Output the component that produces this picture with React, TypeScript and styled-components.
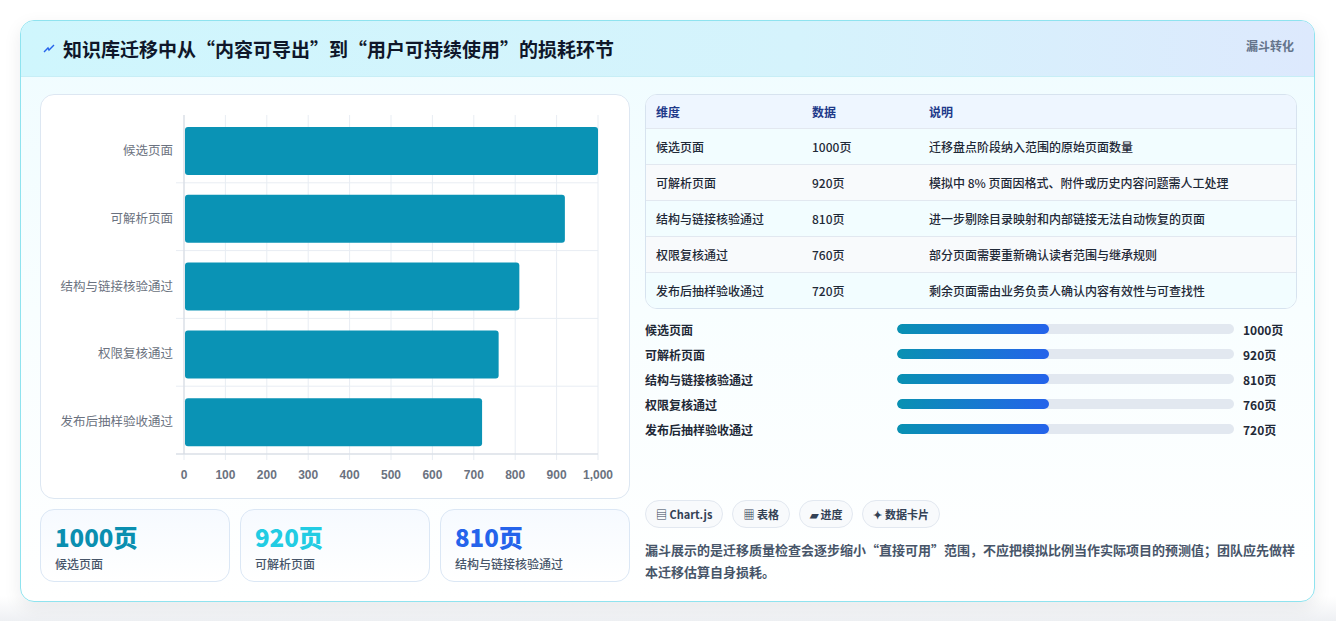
import React from 'react';
import styled, { createGlobalStyle } from 'styled-components';

const GlobalStyle = createGlobalStyle`
  body {
    margin: 0;
    background: #f3f4f6;
    font-family: "Noto Sans CJK SC", "Liberation Sans", sans-serif;
  }
`;

const Page = styled.div`
  width: 1336px;
  height: 621px;
  padding: 20px 21px 0 20px;
  box-sizing: border-box;
  background: linear-gradient(180deg, #ffffff 0%, #ffffff 96%, #eef0f3 100%);
`;

const Card = styled.div`
  height: 580px;
  border: 1px solid #8fe3ef;
  border-radius: 14px;
  overflow: hidden;
  background: linear-gradient(180deg, #effcff 0%, #f8feff 50%, #ffffff 100%);
  box-shadow: 0 6px 18px rgba(15, 23, 42, 0.08);
  display: flex;
  flex-direction: column;
`;

const Header = styled.div`
  height: 55px;
  display: flex;
  align-items: center;
  justify-content: space-between;
  padding: 0 20px 0 22px;
  background: linear-gradient(90deg, #cff6fd 0%, #d5f3fc 60%, #dde9fd 100%);
  border-bottom: 1px solid #c7eef6;
`;

const Title = styled.h1`
  margin: 0;
  display: flex;
  align-items: center;
  gap: 8px;
  font-size: 19px;
  font-weight: 700;
  color: #0f172a;
`;

const Tag = styled.span`
  align-self: flex-start;
  margin-top: 16px;
  font-size: 12px;
  font-weight: 700;
  color: #64748b;
`;

const Body = styled.div`
  flex: 1;
  display: grid;
  grid-template-columns: 590px 652px;
  gap: 15px;
  padding: 17px 18px 18px 19px;
`;

const LeftCol = styled.div`
  display: flex;
  flex-direction: column;
  gap: 10px;
`;

const ChartBox = styled.div`
  height: 403px;
  border: 1px solid #dde7f2;
  border-radius: 14px;
  background: #ffffff;
`;

const Stats = styled.div`
  display: grid;
  grid-template-columns: repeat(3, 1fr);
  gap: 10px;
`;

const Stat = styled.div`
  height: 73px;
  box-sizing: border-box;
  border: 1px solid #dbe7f5;
  border-radius: 14px;
  background: linear-gradient(180deg, #f6faff 0%, #ffffff 100%);
  padding: 11px 14px;
`;

const StatValue = styled.div<{ $c: string }>`
  font-size: 24px;
  font-weight: 800;
  color: ${p => p.$c};
  line-height: 32px;
`;

const StatLabel = styled.div`
  font-size: 12px;
  color: #475569;
  font-weight: 500;
  margin-top: 2px;
`;

const RightCol = styled.div`
  display: flex;
  flex-direction: column;
`;

const Table = styled.div`
  border: 1px solid #d7e3ef;
  border-radius: 12px;
  overflow: hidden;
  background: #ffffff;
`;

const Row = styled.div<{ $head?: boolean; $alt?: boolean }>`
  display: grid;
  grid-template-columns: 156px 117px 1fr;
  height: ${p => (p.$head ? '33px' : '35px')};
  align-items: center;
  padding-left: 10px;
  font-size: 12px;
  font-weight: ${p => (p.$head ? 700 : 500)};
  color: ${p => (p.$head ? '#1e3a8a' : '#1f2937')};
  background: ${p => (p.$head ? '#eef6ff' : p.$alt ? '#f8fafc' : '#f2fdff')};
  & + & {
    border-top: 1px solid #e2e8f0;
  }
`;

const Bars = styled.div`
  display: flex;
  flex-direction: column;
  gap: 7px;
  margin-top: 11px;
`;

const BarRow = styled.div`
  display: grid;
  grid-template-columns: 243px 337px 1fr;
  gap: 0 9px;
  align-items: center;
  height: 18px;
  font-size: 12px;
  font-weight: 700;
  color: #1f2937;
`;

const Track = styled.div`
  height: 10px;
  border-radius: 5px;
  background: #e2e8f0;
  overflow: hidden;
`;

const Fill = styled.div`
  height: 100%;
  border-radius: 5px;
  background: linear-gradient(90deg, #0891b2, #2563eb);
`;

const Chips = styled.div`
  display: flex;
  gap: 9px;
  margin-top: auto;
`;

const Chip = styled.span`
  height: 28px;
  box-sizing: border-box;
  display: inline-flex;
  align-items: center;
  gap: 4px;
  padding: 0 10px;
  border: 1px solid #e2e8f0;
  border-radius: 14px;
  background: #f8fafc;
  font-size: 11px;
  font-weight: 700;
  color: #334155;
`;

const Note = styled.p`
  margin: 11px 0 0;
  font-size: 13px;
  line-height: 22px;
  font-weight: 600;
  color: #475569;
`;

const data = [
  { label: '候选页面', value: 1000, desc: '迁移盘点阶段纳入范围的原始页面数量' },
  { label: '可解析页面', value: 920, desc: '模拟中 8% 页面因格式、附件或历史内容问题需人工处理' },
  { label: '结构与链接核验通过', value: 810, desc: '进一步剔除目录映射和内部链接无法自动恢复的页面' },
  { label: '权限复核通过', value: 760, desc: '部分页面需要重新确认读者范围与继承规则' },
  { label: '发布后抽样验收通过', value: 720, desc: '剩余页面需由业务负责人确认内容有效性与可查找性' },
];

const X0 = 143;
const X1 = 557;
const TOP = 20;
const BOTTOM = 359;
const band = (BOTTOM - TOP) / data.length;

const Chart = () => (
  <svg width="589" height="403" style={{ display: 'block' }}>
    {Array.from({ length: 11 }).map((_, i) => {
      const x = X0 + ((X1 - X0) * i) / 10;
      return (
        <g key={i}>
          <line x1={x} y1={TOP} x2={x} y2={BOTTOM + 6} stroke="#e8edf3" />
          <text x={x} y={384} textAnchor="middle" fontSize="12" fontWeight="600" fill="#6b7280" fontFamily="Liberation Sans, sans-serif">
            {i === 10 ? '1,000' : i * 100}
          </text>
        </g>
      );
    })}
    {data.map((d, i) => (
      <line key={'h' + i} x1={X0 - 8} x2={X1} y1={TOP + band * (i + 1)} y2={TOP + band * (i + 1)} stroke="#e8edf3" />
    ))}
    <line x1={X0} y1={TOP} x2={X0} y2={BOTTOM} stroke="#d4d9e1" />
    <line x1={X0 - 8} y1={BOTTOM} x2={X1} y2={BOTTOM} stroke="#d4d9e1" />
    {data.map((d, i) => {
      const y = TOP + band * i + 12;
      return (
        <g key={d.label}>
          <rect x={X0 + 1} y={y} width={((X1 - X0) * d.value) / 1000 - 1} height={48} rx={3} fill="#0a93b5" />
          <text x={132} y={y + 28} textAnchor="end" fontSize="12.5" fill="#6b7280" fontFamily="Noto Sans CJK SC, sans-serif">
            {d.label}
          </text>
        </g>
      );
    })}
  </svg>
);

export default function App() {
  return (
    <Page>
      <GlobalStyle />
      <Card>
        <Header>
          <Title>
            <svg width="12" height="10" viewBox="0 0 12 10">
              <path d="M1 8 L5 4 L6 6 L11 1" stroke="#2563eb" strokeWidth="1.4" fill="none" />
            </svg>
            知识库迁移中从“内容可导出”到“用户可持续使用”的损耗环节
          </Title>
          <Tag>漏斗转化</Tag>
        </Header>
        <Body>
          <LeftCol>
            <ChartBox>
              <Chart />
            </ChartBox>
            <Stats>
              <Stat>
                <StatValue $c="#0a8fb0">1000页</StatValue>
                <StatLabel>候选页面</StatLabel>
              </Stat>
              <Stat>
                <StatValue $c="#22cce3">920页</StatValue>
                <StatLabel>可解析页面</StatLabel>
              </Stat>
              <Stat>
                <StatValue $c="#2563eb">810页</StatValue>
                <StatLabel>结构与链接核验通过</StatLabel>
              </Stat>
            </Stats>
          </LeftCol>
          <RightCol>
            <Table>
              <Row $head>
                <span>维度</span>
                <span>数据</span>
                <span>说明</span>
              </Row>
              {data.map((d, i) => (
                <Row key={d.label} $alt={i % 2 === 1}>
                  <span>{d.label}</span>
                  <span>{d.value}页</span>
                  <span>{d.desc}</span>
                </Row>
              ))}
            </Table>
            <Bars>
              {data.map(d => (
                <BarRow key={d.label}>
                  <span>{d.label}</span>
                  <Track>
                    <Fill style={{ width: '45%' }} />
                  </Track>
                  <span>{d.value}页</span>
                </BarRow>
              ))}
            </Bars>
            <Chips>
              <Chip>▤ Chart.js</Chip>
              <Chip>▦ 表格</Chip>
              <Chip>▰ 进度</Chip>
              <Chip>✦ 数据卡片</Chip>
            </Chips>
            <Note>
              漏斗展示的是迁移质量检查会逐步缩小“直接可用”范围，不应把模拟比例当作实际项目的预测值；团队应先做样本迁移估算自身损耗。
            </Note>
          </RightCol>
        </Body>
      </Card>
    </Page>
  );
}
